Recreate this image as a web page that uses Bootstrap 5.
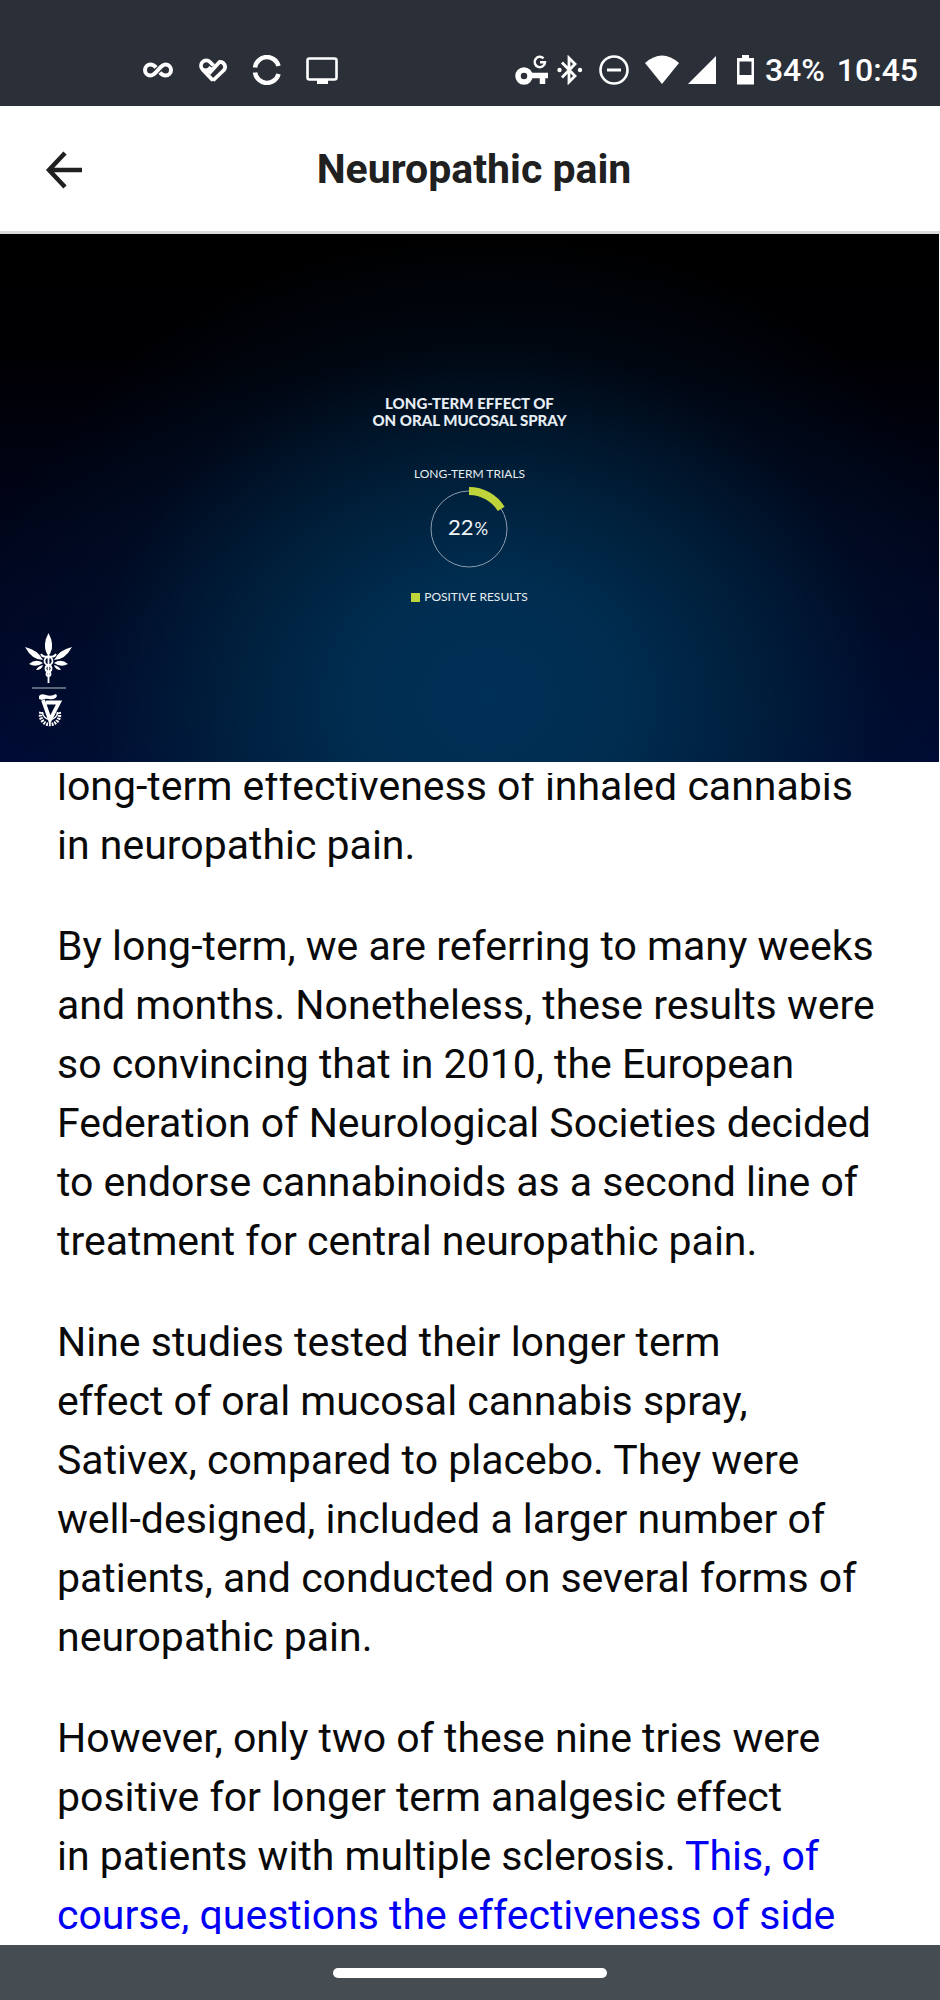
<!DOCTYPE html>
<html lang="en">
<head>
  <meta charset="UTF-8">
  <title>Neuropathic pain</title>
  <meta name="viewport" content="width=device-width, initial-scale=1">
  <link href="https://cdn.jsdelivr.net/npm/bootstrap@5.3.3/dist/css/bootstrap.min.css" rel="stylesheet">
  <style>
    body { font-family: Roboto, "Liberation Sans", sans-serif; color: #0a0a0a; }
    .status-bar { background: #2b3038; height: 106px; padding: 34px 22px 0 142px; }
    .status-bar svg { display: block; flex: none; }
    .status-text { font-size: 32px; line-height: 36px; font-weight: 500; }
    .app-bar { height: 128px; padding: 0 28px 0 36px; border-bottom: 3px solid #d9dbd9; }
    .app-bar h1 { font-size: 41px; line-height: 48px; font-weight: 700; color: #202020; }
    .side-slot { width: 56px; }
    .video-box {
      height: 528px;
      margin-right: 1px;
      padding-top: 161px;
      font-family: Lato, "Liberation Sans", sans-serif;
      color: #e6edf3;
      background:
        radial-gradient(ellipse 56% 88% at 52% 88%, #002f57 0%, #002d50 25%, rgba(0, 38, 66, .75) 50%, rgba(0, 20, 44, .35) 76%, rgba(0, 0, 0, 0) 100%),
        linear-gradient(#000 0%, #000004 25%, #00051a 55%, #000a36 100%);
    }
    .video-title { font-size: 15px; line-height: 17px; font-weight: 900; }
    .video-label { font-size: 12px; line-height: 16px; }
    .chart-label { margin-top: 37px; }
    .legend { margin-top: 17px; }
    .legend-key { width: 9px; height: 9px; background: #bfd43a; }
    .partner-logos { left: 24px; bottom: 32px; }
    .transcript { margin: 11px 0; padding: 0 57px; font-size: 41px; line-height: 59px; }
    .transcript-text { margin-top: -16px; }
    .transcript-text p { margin-bottom: 42px; }
    .now-playing { color: #0000f5; }
    .gesture-bar { background: #454d52; height: 55px; }
    .gesture-pill { width: 274px; height: 10px; }
  </style>
</head>
<body class="bg-white vh-100 d-flex flex-column overflow-hidden">

  <!-- status bar -->
  <div class="status-bar d-flex align-items-center justify-content-between text-white flex-shrink-0">
    <div class="d-flex align-items-center">
      <svg class="me-4" width="32" height="30" viewBox="0 0 32 30" fill="none" stroke="#fff" stroke-width="4">
        <path d="M14 12.500C12.500 10.700 11 9.500 8.500 9.500a5.500 5.500 0 0 0 0 11c6 0 9-11 15-11a5.500 5.500 0 0 1 0 11c-2.500 0-4-1.200-5.500-3"/>
      </svg>
      <svg class="me-4" width="30" height="30" viewBox="0 0 30 30" fill="none" stroke="#fff" stroke-width="3.800" stroke-linejoin="round">
        <path d="M15 25.500L4.500 14.500a5.500 5.500 0 0 1 0-7.500a5.300 5.300 0 0 1 7.500 0l3.500 3.500M11 18.500L21.500 7a5 5 0 0 1 4.500 8L15 25.500M4.500 14.500q5 3 8.500-2.500"/>
      </svg>
      <svg class="me-4" width="30" height="30" viewBox="0 0 30 30" fill="none" stroke="#fff" stroke-width="4.500">
        <path d="M3 12.500a12 12 0 0 1 23.500-1.500M3 17.500a12 12 0 0 0 23.500 1.500"/>
      </svg>
      <svg width="32" height="30" viewBox="0 0 32 30">
        <rect x="1.500" y="3.500" width="29" height="21" rx="2" fill="none" stroke="#fff" stroke-width="2.600"/>
        <path d="M11 25h11v4H11z" fill="#fff"/>
      </svg>
    </div>

    <div class="d-flex align-items-center">
      <svg width="34" height="30" viewBox="0 0 34 30" fill="none" stroke="#fff">
        <circle cx="9" cy="21" r="6" stroke-width="5.500"/>
        <path d="M14 20.500h19M27.500 20v9" stroke-width="5.500"/>
        <path d="M28.500 3.300a5.200 5.200 0 1 0 1.500 4h-5" stroke-width="2.400"/>
      </svg>
      <svg class="ms-2" width="26" height="30" viewBox="0 0 26 30" fill="none" stroke="#fff" stroke-width="2.800">
        <path d="M5 7.500L18 21l-6 6V3l6 6L5 22.500"/>
        <circle cx="2.500" cy="15" r="2.200" fill="#fff" stroke="none"/>
        <circle cx="23" cy="15" r="2.200" fill="#fff" stroke="none"/>
      </svg>
      <svg class="ms-3" width="30" height="30" viewBox="0 0 30 30" fill="none" stroke="#fff">
        <circle cx="15" cy="15" r="13.500" stroke-width="2.600"/>
        <path d="M8 15h14" stroke-width="3"/>
      </svg>
      <svg class="ms-3" width="34" height="30" viewBox="0 0 34 30" fill="#fff">
        <path d="M0 8Q17-7 34 8L17 29z"/>
      </svg>
      <svg class="ms-2" width="30" height="30" viewBox="0 0 30 30" fill="#fff">
        <path d="M29 1v28H1z"/>
      </svg>
      <svg class="ms-3" width="24" height="30" viewBox="0 0 24 30">
        <path d="M9 0h7v3h5v26.500H4V3h5z" fill="#fff"/>
        <path d="M6.500 6.500h12V20h-12z" fill="#2b3038"/>
      </svg>
      <span class="status-text ms-2 me-1">34%</span>
      <span class="status-text ms-2">10:45</span>
    </div>
  </div>

  <!-- app bar -->
  <header class="app-bar d-flex align-items-center justify-content-between flex-shrink-0">
    <button type="button" class="btn border-0 p-0 side-slot" aria-label="Back">
      <svg class="d-block mx-auto" width="40" height="40" viewBox="0 0 40 40" fill="none" stroke="#202020" stroke-width="4.500">
        <path d="M38 21H6M21 4L5 21l16 17"/>
      </svg>
    </button>
    <h1 class="m-0 text-center">Neuropathic pain</h1>
    <div class="side-slot"></div>
  </header>

  <!-- video frame -->
  <section class="video-box position-relative d-flex flex-column align-items-center flex-shrink-0 text-center">
    <div class="video-title">LONG-TERM EFFECT OF<br>ON ORAL MUCOSAL SPRAY</div>
    <div class="video-label chart-label">LONG-TERM TRIALS</div>
    <svg width="90" height="90" viewBox="0 0 90 90" fill="none">
      <circle cx="44" cy="47" r="38" stroke="#8d9dae"/>
      <path d="M44 9A38 38 0 0 1 76.200 26.900" stroke="#bfd43a" stroke-width="8"/>
      <text x="23" y="53" fill="#f1f5f8" font-size="22">22<tspan dx="1" font-size="17">%</tspan></text>
    </svg>
    <div class="video-label legend d-flex align-items-center gap-1">
      <span class="legend-key"></span>POSITIVE RESULTS
    </div>

    <svg class="partner-logos position-absolute" width="50" height="98" viewBox="0 0 50 98" fill="#fff">
      <!-- leaf -->
      <path d="M24.500 1Q31 13 26 22h-3Q18 13 24.500 1z"/>
      <path d="M1 15Q14 18 19 28Q8 28 1 15zM48 15Q35 18 30 28Q41 28 48 15z"/>
      <path d="M5 32Q12 26 19 31Q12 36 5 32zM44 32Q37 26 30 31Q37 36 44 32z"/>
      <path d="M12 38Q14 34 19 33Q18 38 12 38zM37 38Q35 34 30 33Q31 38 37 38z"/>
      <g fill="none" stroke="#fff" stroke-width="1.800">
        <path d="M24.500 20v31M17 22q2 4 7.500 2q5.500 2 7.500-2"/>
        <circle cx="24.500" cy="29" r="4"/>
        <circle cx="24.500" cy="36.500" r="3"/>
        <circle cx="24.500" cy="42" r="2"/>
      </g>
      <path d="M8 55.500h34v1H8z" fill="#b6c0cc"/>
      <!-- gear emblem -->
      <path d="M17 80a9.500 9.500 0 1 0 18 0" fill="none" stroke="#fff" stroke-width="3.500" stroke-dasharray="1.800 1"/>
      <path d="M18.500 80a7.500 7.500 0 1 0 15 0" fill="none" stroke="#fff" stroke-width="1.500"/>
      <path d="M15 67V64q2-3 7-1q5 2 10-1l1 2q-2 4-8 3q-4-1-7 1z"/>
      <path d="M19 68L26 88L35 70.500H22" fill="none" stroke="#fff" stroke-width="3.800"/>
    </svg>
  </section>

  <!-- transcript, scrolled -->
  <main class="transcript flex-grow-1 overflow-hidden">
    <div class="transcript-text">
      <p>long-term effectiveness of inhaled cannabis<br>in neuropathic pain.</p>
      <p>By long-term, we are referring to many weeks<br>and months. Nonetheless, these results were<br>so convincing that in 2010, the European<br>Federation of Neurological Societies decided<br>to endorse cannabinoids as a second line of<br>treatment for central neuropathic pain.</p>
      <p>Nine studies tested their longer term<br>effect of oral mucosal cannabis spray,<br>Sativex, compared to placebo. They were<br>well-designed, included a larger number of<br>patients, and conducted on several forms of<br>neuropathic pain.</p>
      <p class="mb-0">However, only two of these nine tries were<br>positive for longer term analgesic effect<br>in patients with multiple sclerosis. <span class="now-playing">This, of<br>course, questions the effectiveness of side</span></p>
    </div>
  </main>

  <!-- gesture bar -->
  <footer class="gesture-bar d-flex align-items-center justify-content-center flex-shrink-0">
    <div class="gesture-pill bg-white rounded-pill"></div>
  </footer>

  <script src="https://cdn.jsdelivr.net/npm/bootstrap@5.3.3/dist/js/bootstrap.bundle.min.js"></script>
</body>
</html>
